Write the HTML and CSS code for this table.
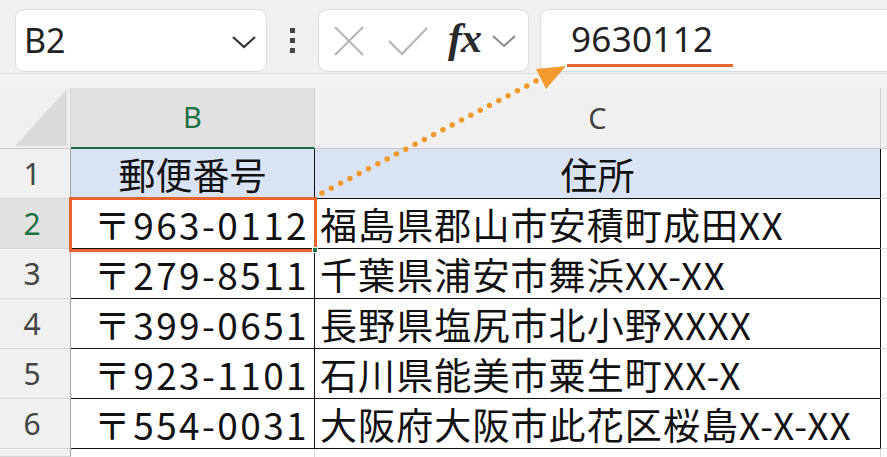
FILE: index.html
```html
<!DOCTYPE html>
<html lang="ja">
<head>
<meta charset="utf-8">
<link rel="stylesheet" href="styles.css">
</head>
<body>
<div class="app">
  <div class="toolbar">
    <div class="namebox">
      <span class="nb-text">B2</span>
      <svg class="nb-chev" width="26" height="14" viewBox="0 0 26 14"><path d="M2 2 L13 12 L24 2" fill="none" stroke="#333" stroke-width="2.2"/></svg>
    </div>
    <div class="dots"><i></i><i></i><i></i></div>
    <div class="fbtns">
      <svg class="ic-x" width="32" height="30" viewBox="0 0 32 30"><path d="M2 1 L30 29 M30 1 L2 29" stroke="#b4b4b4" stroke-width="2" fill="none"/></svg>
      <svg class="ic-check" width="40" height="30" viewBox="0 0 40 30"><path d="M1 15 L14 28 L39 2" stroke="#b4b4b4" stroke-width="2" fill="none"/></svg>
      <span class="fx">fx</span>
      <svg class="ic-chev" width="26" height="14" viewBox="0 0 26 14"><path d="M2 2 L13 12 L24 2" fill="none" stroke="#8a8a8a" stroke-width="2"/></svg>
    </div>
    <div class="fbar">
      <span class="fbar-text">9630112</span>
      <span class="fbar-mark"></span>
    </div>
  </div>
  <div class="band"></div>
  <div class="sheet">
    <div class="corner"><span class="tri"></span></div>
    <div class="colhead sel">B</div>
    <div class="colhead">C</div>
    <div class="colhead d"></div>

    <div class="rowhead">1</div>
    <div class="cell title">郵便番号</div>
    <div class="cell title">住所</div>
    <div class="cell d"></div>

    <div class="rowhead sel">2</div>
    <div class="cell zip">〒963-0112</div>
    <div class="cell addr">福島県郡山市安積町成田XX</div>
    <div class="cell d"></div>

    <div class="rowhead">3</div>
    <div class="cell zip">〒279-8511</div>
    <div class="cell addr">千葉県浦安市舞浜XX-XX</div>
    <div class="cell d"></div>

    <div class="rowhead">4</div>
    <div class="cell zip">〒399-0651</div>
    <div class="cell addr">長野県塩尻市北小野XXXX</div>
    <div class="cell d"></div>

    <div class="rowhead">5</div>
    <div class="cell zip">〒923-1101</div>
    <div class="cell addr">石川県能美市粟生町XX-X</div>
    <div class="cell d"></div>

    <div class="rowhead">6</div>
    <div class="cell zip">〒554-0031</div>
    <div class="cell addr">大阪府大阪市此花区桜島X-X-XX</div>
    <div class="cell d"></div>

    <div class="rowhead last"></div>
    <div class="cell blank"></div>
    <div class="cell blank"></div>
    <div class="cell blank d"></div>
  </div>
  <div class="selbox"><span class="handle"></span></div>
  <svg class="arrow" width="887" height="457" viewBox="0 0 887 457">
    <line x1="322" y1="193" x2="540" y2="79" stroke="#f29a2e" stroke-width="5.5" stroke-linecap="round" stroke-dasharray="0 10.5"/>
    <polygon points="566,66 536,69 546,89" fill="#f29a2e"/>
  </svg>
</div>
</body>
</html>
```

FILE: styles.css
```css
* { box-sizing: border-box; }
html, body { margin: 0; padding: 0; }
body {
  width: 887px;
  height: 457px;
  overflow: hidden;
  background: #ffffff;
  font-family: "Noto Sans", "Noto Sans CJK JP", sans-serif;
}
.app { position: relative; width: 887px; height: 457px; overflow: hidden; }

.toolbar {
  height: 74px;
  background: #f0f0f0;
  border-bottom: 1px solid #dedede;
  display: flex;
  align-items: flex-start;
  padding: 9px 0 0 15px;
}
.namebox {
  width: 252px;
  height: 63px;
  background: #fff;
  border: 1px solid #dcdcdc;
  border-radius: 9px;
  display: flex;
  align-items: center;
  justify-content: space-between;
  padding: 0 9px 0 8px;
}
.nb-text { font-size: 34px; color: #222; line-height: 1.2; }
.nb-chev { margin-top: 2px; }
.dots {
  width: 51px;
  height: 63px;
  display: flex;
  flex-direction: column;
  align-items: center;
  justify-content: center;
  gap: 5px;
}
.dots i { display: block; width: 5px; height: 5px; background: #444; }
.fbtns {
  width: 211px;
  height: 63px;
  background: #fff;
  border: 1px solid #dcdcdc;
  border-radius: 9px;
  display: flex;
  align-items: center;
  padding-left: 14px;
}
.ic-x { margin-right: 23px; }
.ic-check { margin-right: 20px; }
.fx {
  font-family: "Liberation Serif", serif;
  font-style: italic;
  font-weight: bold;
  font-size: 42px;
  color: #2a2a2a;
  line-height: 1.1;
  margin-right: 10px;
  margin-top: -4px;
  letter-spacing: -1px;
}
.fbar {
  position: relative;
  flex: 1;
  height: 63px;
  margin-left: 11px;
  margin-right: -20px;
  background: #fff;
  border: 1px solid #dcdcdc;
  border-radius: 9px;
  padding-left: 30px;
  display: flex;
  align-items: center;
}
.fbar-text { font-size: 35px; color: #222; line-height: 1.2; margin-top: -4px; letter-spacing: 0.3px; }
.fbar-mark {
  position: absolute;
  left: 26px;
  top: 54px;
  width: 166px;
  height: 3px;
  background: #e8652b;
}

.band { height: 14px; background: #f2f2f2; }

.sheet {
  display: grid;
  grid-template-columns: 71px 244px 566px 1fr;
  grid-template-rows: 61px repeat(6, 50px) 1fr;
  height: 369px;
}
.corner {
  position: relative;
  background: #f0f0f0;
  border-right: 1px solid #d0d0d0;
  border-bottom: 1px solid #c8c8c8;
}
.tri {
  position: absolute;
  right: 3px;
  bottom: 2px;
  width: 0;
  height: 0;
  border-left: 52px solid transparent;
  border-bottom: 57px solid #dadada;
}
.colhead {
  background: #f0f0f0;
  border-right: 1px solid #d0d0d0;
  border-bottom: 1px solid #c8c8c8;
  display: flex;
  align-items: center;
  justify-content: center;
  font-size: 29px;
  color: #444;
  padding-bottom: 2px;
}
.colhead.sel {
  background: #e1e1e1;
  color: #1e7145;
  border-bottom: 2px solid #1e7145;
}
.colhead.d { border-right: none; }
.rowhead {
  background: #f0f0f0;
  border-right: 1px solid #a8a8a8;
  border-bottom: 1px solid #d6d6d6;
  display: flex;
  align-items: center;
  justify-content: center;
  font-size: 30px;
  color: #444;
  padding-right: 6px;
}
.rowhead.sel { background: #e1e1e1; color: #1e7145; }
.cell {
  border-right: 1px solid #111;
  border-bottom: 1px solid #111;
  font-family: "Noto Sans CJK JP", sans-serif;
  font-size: 37px;
  color: #111;
  line-height: 48px;
  display: flex;
  align-items: center;
  white-space: nowrap;
}
.cell.title { background: #dae3f3; justify-content: center; }
.cell.zip { justify-content: flex-end; padding-right: 5px; letter-spacing: 2.4px; }
.cell.addr { padding-left: 5px; letter-spacing: 1.1px; }
.cell.d { border-right: none; border-bottom: 1px solid #d9d9d9; border-left: 1px solid #111; margin-left: -1px; background: #fff; }
.cell.blank { border-bottom: none; border-right: 1px solid #d9d9d9; }
.cell.blank.d { border-right: none; border-left: none; margin-left: 0; }

.selbox {
  position: absolute;
  left: 69px;
  top: 197px;
  width: 248px;
  height: 55px;
  border: 3px solid #e8652b;
}
.handle {
  position: absolute;
  right: -4px;
  bottom: -4px;
  width: 6px;
  height: 6px;
  background: #1e7145;
  border: 1px solid #fff;
}
.arrow { position: absolute; left: 0; top: 0; pointer-events: none; }
```
